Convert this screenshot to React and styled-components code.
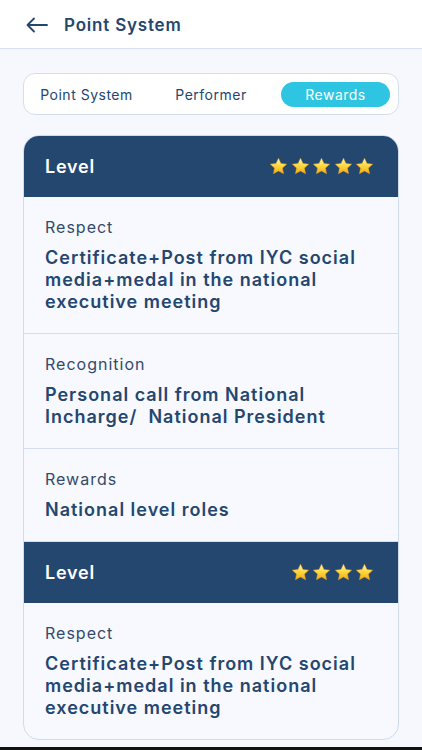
import React from 'react';
import styled, { createGlobalStyle } from 'styled-components';

const levels = [
  {
    stars: 5,
    items: [
      { label: 'Respect', value: 'Certificate+Post from IYC social media+medal in the national executive meeting' },
      { label: 'Recognition', value: 'Personal call from National Incharge/\u00a0 National President' },
      { label: 'Rewards', value: 'National level roles' },
    ],
  },
  {
    stars: 4,
    items: [
      { label: 'Respect', value: 'Certificate+Post from IYC social media+medal in the national executive meeting' },
    ],
  },
];

const tabs = ['Point System', 'Performer', 'Rewards'];

const App = () =>
  <Page>
    <Global />
    <Header>
      <BackIcon />
      <HeaderTitle>Point System</HeaderTitle>
    </Header>
    <Body>
      <Tabs>
        {tabs.map(t => <Tab key={t} active={t === 'Rewards'}>{t}</Tab>)}
      </Tabs>
      <Card>
        {levels.map((level, i) =>
          <React.Fragment key={i}>
            <LevelBar>
              <LevelTitle>Level</LevelTitle>
              <Stars>
                {Array.from({ length: level.stars }).map((_, s) => <Star key={s} />)}
              </Stars>
            </LevelBar>
            {level.items.map(item =>
              <Section key={item.label}>
                <Label>{item.label}</Label>
                <Value>{item.value}</Value>
              </Section>
            )}
          </React.Fragment>
        )}
      </Card>
    </Body>
    <BottomStrip />
  </Page>

export default App;

const BackIcon = () =>
  <svg width="24" height="16" viewBox="0 0 24 16" fill="none" stroke="#24466f" strokeWidth="1.8" strokeLinecap="round" strokeLinejoin="round">
    <path d="M22 8H2.5M9 1.5L2.5 8L9 14.5" />
  </svg>

const Star = () =>
  <svg width="19" height="19" viewBox="0 0 24 24">
    <defs>
      <linearGradient id="sg" x1="0" y1="0" x2="0" y2="1">
        <stop offset="0" stopColor="#fff6c2" />
        <stop offset="0.45" stopColor="#ffdb45" />
        <stop offset="1" stopColor="#f4a814" />
      </linearGradient>
    </defs>
    <path d="M12 1.5l3.1 6.6 7.2.9-5.3 5 1.4 7.1L12 17.6l-6.4 3.5 1.4-7.1-5.3-5 7.2-.9z" fill="url(#sg)" stroke="#e9a21a" strokeWidth="0.6" strokeLinejoin="round" />
  </svg>

const Global = createGlobalStyle`
  html, body { margin: 0; padding: 0; background: #f6f8fd; }
  body { font-family: Inter, "Noto Sans", sans-serif; }
`

const Page = styled.div`
  width: 422px;
  height: 750px;
  overflow: hidden;
  display: flex;
  flex-direction: column;
  background: #f6f8fd;
`

const Header = styled.header`
  height: 49px;
  box-sizing: border-box;
  flex-shrink: 0;
  display: flex;
  align-items: center;
  gap: 15px;
  padding: 1px 0 0 25px;
  background: #ffffff;
  border-bottom: 1.5px solid #d6e1f1;
`

const HeaderTitle = styled.h1`
  margin: 0;
  font-size: 17px;
  font-weight: 600;
  letter-spacing: 0.8px;
  color: #24466f;
`

const Body = styled.main`
  flex: 1;
  overflow: hidden;
  padding: 24px 23px 0;
  display: flex;
  flex-direction: column;
  gap: 20px;
`

const Tabs = styled.nav`
  height: 42px;
  box-sizing: border-box;
  display: flex;
  align-items: center;
  justify-content: space-between;
  padding: 0 8px;
  background: #ffffff;
  border: 1px solid #d3def0;
  border-radius: 12px;
`

const Tab = styled.div`
  width: 109px;
  height: 25px;
  display: flex;
  align-items: center;
  justify-content: center;
  border-radius: 13px;
  font-size: 14px;
  font-weight: 400;
  letter-spacing: 0.5px;
  color: ${p => p.active ? '#ffffff' : '#24466f'};
  background: ${p => p.active ? '#2ec5e3' : 'transparent'};
`

const Card = styled.section`
  height: 605px;
  flex-shrink: 0;
  box-sizing: border-box;
  border: 1px solid #cfdcef;
  border-radius: 16px;
  overflow: hidden;
  background: #f7f9fe;
`

const LevelBar = styled.div`
  height: 61px;
  display: flex;
  align-items: center;
  justify-content: space-between;
  padding: 0 24px 0 21px;
  background: #24476f;
`

const LevelTitle = styled.h2`
  margin: 0;
  font-size: 18px;
  font-weight: 600;
  letter-spacing: 0.8px;
  color: #ffffff;
`

const Stars = styled.div`
  display: flex;
  gap: 2.5px;
`

const Section = styled.div`
  padding: 20px 21px 20px;
  display: flex;
  flex-direction: column;
  gap: 10px;
  border-bottom: 1px solid #d3def0;
  &:last-child { border-bottom: none; }
`

const Label = styled.div`
  font-size: 16px;
  line-height: 20px;
  letter-spacing: 1px;
  color: #34496a;
`

const Value = styled.div`
  font-size: 18px;
  line-height: 22px;
  font-weight: 600;
  letter-spacing: 1px;
  color: #24466f;
  padding-right: 10px;
`

const BottomStrip = styled.div`
  height: 3px;
  flex-shrink: 0;
  background: #111;
`
